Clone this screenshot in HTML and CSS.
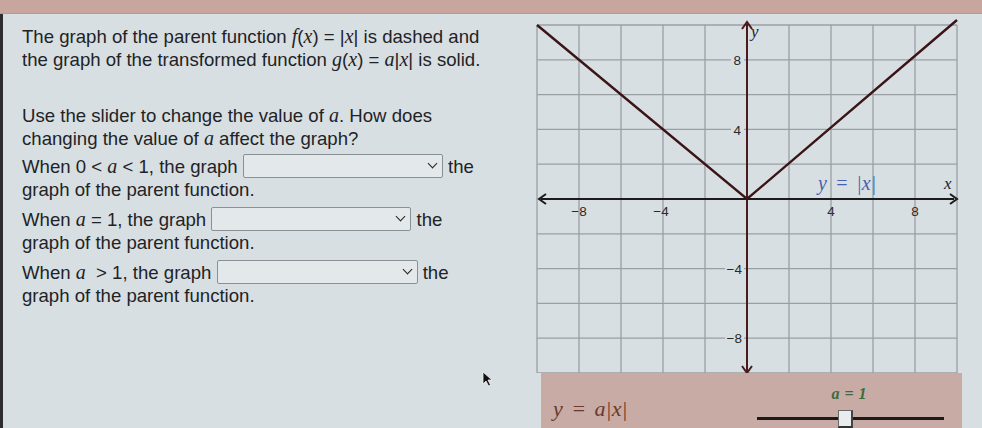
FILE: index.html
```html
<!DOCTYPE html>
<html>
<head>
<meta charset="utf-8">
<link rel="stylesheet" href="styles.css">
</head>
<body>
<div class="topbar"></div>
<div class="main">
  <div class="left">
    <p class="para">The graph of the parent function <span class="fn">f</span>(<span class="mi">x</span>) = |<span class="mi">x</span>| is dashed and<br>the graph of the transformed function <span class="mi">g</span>(<span class="mi">x</span>) = <span class="mi">a</span>|<span class="mi">x</span>| is solid.</p>
    <p class="para p2">Use the slider to change the value of <span class="mi">a</span>. How does<br>changing the value of <span class="mi">a</span> affect the graph?</p>
    <p class="q">When 0 &lt; <span class="mi">a</span> &lt; 1, the graph <span class="sel w1"><span class="chev"></span></span> the<br>graph of the parent function.</p>
    <p class="q">When <span class="mi">a</span> = 1, the graph <span class="sel w2"><span class="chev"></span></span> the<br>graph of the parent function.</p>
    <p class="q">When <span class="mi">a</span> &nbsp;&gt; 1, the graph <span class="sel w3"><span class="chev"></span></span> the<br>graph of the parent function.</p>
  </div>
  <div class="right">
    <svg class="graph" width="440" height="359" viewBox="530 14 440 359" xmlns="http://www.w3.org/2000/svg">
      <g stroke="#9a9fa2" stroke-width="1.3">
        <line x1="537" y1="25" x2="537" y2="373"/>
        <line x1="579" y1="25" x2="579" y2="373"/>
        <line x1="621" y1="25" x2="621" y2="373"/>
        <line x1="663" y1="25" x2="663" y2="373"/>
        <line x1="705" y1="25" x2="705" y2="373"/>
        <line x1="789" y1="25" x2="789" y2="373"/>
        <line x1="831" y1="25" x2="831" y2="373"/>
        <line x1="873" y1="25" x2="873" y2="373"/>
        <line x1="915" y1="25" x2="915" y2="373"/>
        <line x1="957" y1="25" x2="957" y2="373"/>
        <line x1="537" y1="25" x2="957" y2="25"/>
        <line x1="537" y1="59.8" x2="957" y2="59.8"/>
        <line x1="537" y1="94.6" x2="957" y2="94.6"/>
        <line x1="537" y1="129.4" x2="957" y2="129.4"/>
        <line x1="537" y1="164.2" x2="957" y2="164.2"/>
        <line x1="537" y1="233.8" x2="957" y2="233.8"/>
        <line x1="537" y1="268.6" x2="957" y2="268.6"/>
        <line x1="537" y1="303.4" x2="957" y2="303.4"/>
        <line x1="537" y1="338.2" x2="957" y2="338.2"/>
        <line x1="537" y1="373" x2="957" y2="373"/>
      </g>
      <g class="ticks">
        <rect x="731" y="52" width="13" height="15" fill="#d7dfe2"/>
        <text x="741" y="65" text-anchor="end">8</text>
        <rect x="731" y="122" width="13" height="15" fill="#d7dfe2"/>
        <text x="741" y="135" text-anchor="end">4</text>
        <rect x="725" y="261" width="19" height="15" fill="#d7dfe2"/>
        <text x="742" y="274" text-anchor="end">−4</text>
        <rect x="725" y="330" width="19" height="15" fill="#d7dfe2"/>
        <text x="742" y="343" text-anchor="end">−8</text>
        <text x="579" y="216" text-anchor="middle">−8</text>
        <text x="661" y="216" text-anchor="middle">−4</text>
        <text x="831" y="216" text-anchor="middle">4</text>
        <text x="915" y="216" text-anchor="middle">8</text>
      </g>
      <g stroke="#1c1a1a" stroke-width="2" fill="none">
        <line x1="541" y1="199" x2="954" y2="199"/>
        <polyline points="546,194 539,199 546,204"/>
        <polyline points="950,194 957,199 950,204"/>
      </g>
      <g stroke="#4a1a1c" stroke-width="2" fill="none">
        <line x1="747" y1="24" x2="747" y2="371"/>
        <polyline points="742,29 747,22 752,29"/>
        <polyline points="742,366 747,373 752,366"/>
      </g>
      <polyline points="537,25 747,199 957,20" fill="none" stroke="#3a1416" stroke-width="2.4"/>
      <text class="ax" x="751" y="37">y</text>
      <text class="ax" x="944" y="189">x</text>
      <text class="lbl" x="818" y="190">y = |x|</text>
    </svg>
    <div class="panel">
      <span class="eq">y = a|x|</span>
      <div class="slider">
        <span class="aval">a = 1</span>
        <span class="track"></span>
        <span class="handle"></span>
      </div>
    </div>
  </div>
</div>
<svg class="cursor" width="12" height="17" viewBox="0 0 12 17" xmlns="http://www.w3.org/2000/svg"><path d="M1 1 L1 13 L4 10 L6.5 15 L8.5 14 L6 9 L10 9 Z" fill="#111" stroke="#f2f2f2" stroke-width="0.8"/></svg>
</body>
</html>
```
FILE: styles.css
```css
html, body {
  margin: 0;
  padding: 0;
}
body {
  width: 982px;
  height: 428px;
  overflow: hidden;
  background: #d7dfe2;
  font-family: "Liberation Sans", Arial, sans-serif;
  color: #1f2326;
  position: relative;
}
.topbar {
  height: 13px;
  background: #c8a69d;
  border-bottom: 1px solid #b89890;
}
.main {
  display: flex;
  border-left: 3px solid #2a2c2e;
  height: 414px;
}
.left {
  width: 508px;
  padding: 11px 0 0 19px;
  font-size: 18.6px;
  line-height: 22px;
}
.para {
  margin: 0;
}
.p2 {
  margin-top: 33px;
}
.q {
  margin: 7px 0 0 0;
  line-height: 23px;
}
.p2 + .q {
  margin-top: 5px;
}
.mi {
  font-family: "Liberation Serif", "Times New Roman", serif;
  font-style: italic;
  font-size: 20px;
}
.fn {
  font-family: "Liberation Serif", serif;
  font-style: italic;
  font-size: 20px;
}
.sel {
  display: inline-block;
  position: relative;
  height: 24px;
  border: 1px solid #8b9094;
  border-radius: 2px;
  background: #e3e9eb;
  vertical-align: middle;
  margin-top: -5px;
  box-sizing: border-box;
}
.w1 { width: 200px; }
.w2 { width: 200px; }
.w3 { width: 201px; }
.chev {
  position: absolute;
  right: 6px;
  top: 5px;
  width: 6px;
  height: 6px;
  border-right: 1.8px solid #222;
  border-bottom: 1.8px solid #222;
  transform: rotate(45deg);
}
.right {
  width: 440px;
  display: flex;
  flex-direction: column;
}
.graph {
  display: block;
}
.ticks text {
  font-family: "Liberation Sans", Arial, sans-serif;
  font-size: 13.5px;
  fill: #2a2a2a;
}
.ax {
  font-family: "Liberation Serif", serif;
  font-style: italic;
  font-size: 17px;
  fill: #222;
}
.lbl {
  font-family: "Liberation Serif", serif;
  font-style: italic;
  font-size: 20px;
  fill: #4b5fae;
  word-spacing: 3px;
}
.panel {
  margin-left: 11px;
  width: 421px;
  height: 55px;
  background: #c8aba4;
  display: flex;
  position: relative;
}
.eq {
  font-family: "Liberation Serif", serif;
  font-style: italic;
  font-size: 22px;
  color: #6a3a2c;
  padding: 23px 0 0 12px;
  word-spacing: 3px;
}
.slider {
  position: relative;
  margin-left: 130px;
  width: 190px;
}
.aval {
  position: absolute;
  left: 74px;
  top: 12px;
  font-family: "Liberation Serif", serif;
  font-style: italic;
  font-weight: bold;
  font-size: 16px;
  color: #3a6c40;
  word-spacing: 1px;
}
.track {
  position: absolute;
  left: 0;
  top: 44px;
  width: 187px;
  height: 2.5px;
  background: #1b1b1b;
}
.handle {
  position: absolute;
  left: 81px;
  top: 37px;
  width: 15px;
  height: 18px;
  background: #e9ecec;
  border: 1px solid #6a6a6a;
  border-bottom: 2px solid #333;
  border-right: 2px solid #444;
  box-sizing: border-box;
}
.cursor {
  position: absolute;
  left: 482px;
  top: 371px;
}
```
